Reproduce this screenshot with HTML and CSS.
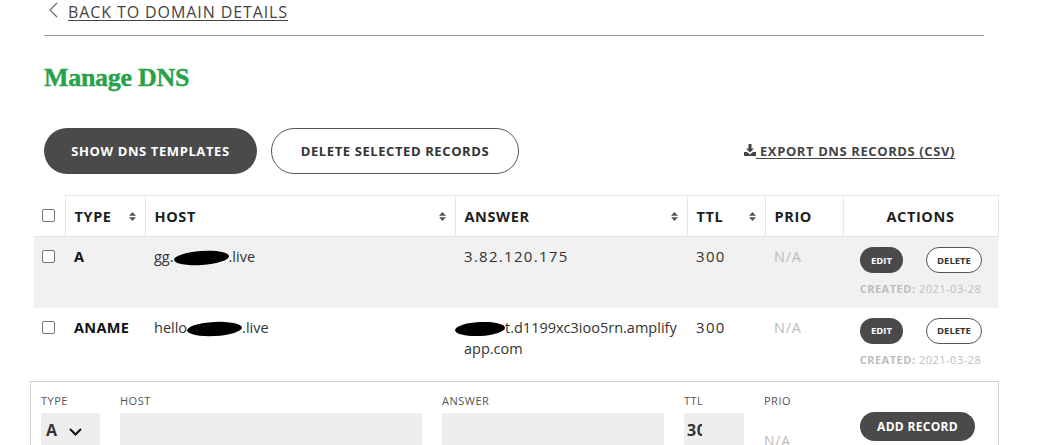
FILE: index.html
```html
<!DOCTYPE html>
<html>
<head>
<meta charset="utf-8">
<link rel="stylesheet" href="styles.css">
</head>
<body>
<div class="page">
  <div class="top">
    <a class="back" href="#">
      <svg class="chev" width="10" height="16" viewBox="0 0 10 16"><path d="M9 1 L2 8 L9 15" fill="none" stroke="#666" stroke-width="1.1"/></svg>
      <span class="back-text">BACK TO DOMAIN DETAILS</span>
    </a>
    <div class="rule"></div>
    <h1 class="title">Manage DNS</h1>
    <div class="toolbar">
      <button class="pill pill-dark">SHOW DNS TEMPLATES</button>
      <button class="pill pill-outline">DELETE SELECTED RECORDS</button>
      <a class="export" href="#">
        <svg class="dl" width="12" height="12" viewBox="0 0 12 12"><path d="M4.5 0 H7.5 V4.5 H10 L6 8.5 L2 4.5 H4.5 Z" fill="#444"/><path d="M0 8 H3 L6 10.5 L9 8 H12 V12 H0 Z" fill="#444"/></svg><span class="export-text"> EXPORT DNS RECORDS (CSV)</span>
      </a>
    </div>
  </div>

  <table class="dns">
    <colgroup>
      <col style="width:31px"><col style="width:80px"><col style="width:310px"><col style="width:232px"><col style="width:78px"><col style="width:78px"><col style="width:155px">
    </colgroup>
    <thead>
      <tr>
        <th class="c-check"><span class="cb"></span></th>
        <th><div class="th-in">TYPE<svg class="sort" width="7" height="9" viewBox="0 0 7 9"><path d="M3.5 0 L7 3.7 H0 Z M0 5.3 H7 L3.5 9 Z" fill="#555"/></svg></div></th>
        <th><div class="th-in">HOST<svg class="sort" width="7" height="9" viewBox="0 0 7 9"><path d="M3.5 0 L7 3.7 H0 Z M0 5.3 H7 L3.5 9 Z" fill="#555"/></svg></div></th>
        <th><div class="th-in">ANSWER<svg class="sort" width="7" height="9" viewBox="0 0 7 9"><path d="M3.5 0 L7 3.7 H0 Z M0 5.3 H7 L3.5 9 Z" fill="#555"/></svg></div></th>
        <th><div class="th-in">TTL<svg class="sort" width="7" height="9" viewBox="0 0 7 9"><path d="M3.5 0 L7 3.7 H0 Z M0 5.3 H7 L3.5 9 Z" fill="#555"/></svg></div></th>
        <th><div class="th-in">PRIO</div></th>
        <th class="c-actions">ACTIONS</th>
      </tr>
    </thead>
    <tbody>
      <tr class="row-alt">
        <td class="c-check"><span class="cb"></span></td>
        <td class="type">A</td>
        <td>gg.<span class="blob blob-a"></span>.live</td>
        <td class="num">3.82.120.175</td>
        <td class="num">300</td>
        <td class="na">N/A</td>
        <td class="c-actions">
          <div class="acts"><button class="mini mini-dark">EDIT</button><button class="mini mini-outline">DELETE</button></div>
          <div class="created"><b>CREATED:</b> 2021-03-28</div>
        </td>
      </tr>
      <tr>
        <td class="c-check"><span class="cb"></span></td>
        <td class="type">ANAME</td>
        <td>hello<span class="blob blob-b"></span>.live</td>
        <td><span class="blob blob-c"></span>t.d1199xc3ioo5rn.amplify<br>app.com</td>
        <td class="num">300</td>
        <td class="na">N/A</td>
        <td class="c-actions">
          <div class="acts"><button class="mini mini-dark">EDIT</button><button class="mini mini-outline">DELETE</button></div>
          <div class="created"><b>CREATED:</b> 2021-03-28</div>
        </td>
      </tr>
    </tbody>
  </table>

  <div class="add-form">
    <div class="field">
      <div class="lbl">TYPE</div>
      <div class="inp inp-select"><span class="sel-val">A</span><svg width="13" height="8" viewBox="0 0 13 8"><path d="M1 1 L6.5 6.5 L12 1" fill="none" stroke="#111" stroke-width="2"/></svg></div>
    </div>
    <div class="field">
      <div class="lbl">HOST</div>
      <div class="inp"></div>
    </div>
    <div class="field">
      <div class="lbl">ANSWER</div>
      <div class="inp"></div>
    </div>
    <div class="field">
      <div class="lbl">TTL</div>
      <div class="inp inp-ttl"><span class="ttl-clip">300</span></div>
    </div>
    <div class="field">
      <div class="lbl">PRIO</div>
      <div class="prio-na">N/A</div>
    </div>
    <div class="field field-btn">
      <button class="add-btn">ADD RECORD</button>
    </div>
  </div>
</div>
</body>
</html>
```

FILE: styles.css
```css
* { box-sizing: border-box; }
html, body { margin: 0; padding: 0; background: #fff; }
body {
  font-family: "Open Sans", "Liberation Sans", sans-serif;
  color: #333;
  overflow: hidden;
}
.page { width: 1053px; }
.top { padding: 0 69px 0 44px; }

.back {
  display: flex;
  align-items: center;
  height: 24px;
  color: #444;
  text-decoration: none;
  padding-left: 4px;
}
.chev { margin-right: 10px; margin-top: -4px; }
.back-text {
  font-size: 16px;
  letter-spacing: 0.9px;
  text-decoration: underline;
  text-underline-offset: 2px;
  text-decoration-thickness: 1px;
}
.rule { height: 1px; background: #9a9a9a; margin-top: 11px; }

.title {
  margin: 27px 0 0;
  font-family: "Liberation Serif", "DejaVu Serif", serif;
  font-weight: bold;
  font-size: 26px;
  line-height: 30px;
  color: #27a24a;
  letter-spacing: -0.3px;
  -webkit-text-stroke: 0.4px #27a24a;
}

.toolbar {
  display: flex;
  align-items: center;
  margin-top: 35px;
  height: 46px;
}
.pill {
  height: 46px;
  border-radius: 23px;
  font-family: inherit;
  font-weight: 700;
  font-size: 13px;
  letter-spacing: 0.6px;
  padding: 0;
  cursor: pointer;
}
.pill-dark { width: 213px; background: #4a4a4a; color: #fff; border: 0; }
.pill-outline { width: 248px; margin-left: 14px; background: #fff; color: #333; border: 1px solid #555; }
.export {
  margin-left: auto;
  margin-right: 29px;
  color: #444;
  font-weight: 700;
  font-size: 13px;
  letter-spacing: 0.6px;
  text-decoration: none;
  display: flex;
  align-items: center;
}
.export-text { text-decoration: underline; text-underline-offset: 2px; white-space: pre; }
.dl { margin-top: -3px; }

.dns {
  margin: 21px 0 0 34px;
  border-collapse: collapse;
  table-layout: fixed;
  width: 964px;
  font-size: 14.5px;
}
.dns th {
  height: 41px;
  text-align: left;
  font-weight: 700;
  font-size: 14.5px;
  letter-spacing: 0.6px;
  color: #1e1e1e;
  border: 1px solid #e6e6e6;
  padding: 0 9px;
  vertical-align: middle;
}
.dns th.c-check { border: 0; border-bottom: 1px solid #e6e6e6; padding: 0 0 0 8px; }
.th-in { display: flex; align-items: center; justify-content: space-between; }
.sort { margin-top: 1px; }
.dns th.c-actions { text-align: center; }

.dns td {
  vertical-align: top;
  padding: 9px 9px 0 9px;
  color: #333;
  line-height: 21px;
}
.dns tbody tr { height: 71px; }
.row-alt td { background: #f1f1f1; }
.dns td.c-check { padding: 13px 0 0 8px; }
.dns td.type { font-weight: 700; font-size: 14.5px; color: #111; letter-spacing: 0.3px; }
.dns td.num { font-size: 15px; letter-spacing: 1.3px; }
.dns td.na { color: #bbb; letter-spacing: 0.8px; }

.cb {
  display: block;
  width: 13px;
  height: 13px;
  border: 1px solid #767676;
  border-radius: 2px;
  background: #fff;
}
.blob {
  display: inline-block;
  height: 14px;
  background: #000;
  border-radius: 50%;
  vertical-align: -3px;
}
.blob-a { width: 55px; transform: rotate(-4deg); }
.blob-b { width: 55px; transform: rotate(-3deg); }
.blob-c { width: 50px; margin-left: -9px; transform: rotate(-3deg); }

.dns td.c-actions { text-align: center; padding: 10px 0 0 0; }
.acts { display: flex; justify-content: center; gap: 23px; margin-left: 1px; }
.mini {
  height: 26px;
  border-radius: 13px;
  font-family: inherit;
  font-weight: 700;
  font-size: 9.5px;
  letter-spacing: 0;
  padding: 0;
}
.mini-dark { width: 43px; background: #4a4a4a; color: #fff; border: 0; }
.mini-outline { width: 56px; background: #fff; color: #333; border: 1px solid #555; }
.created {
  margin-top: 9px;
  font-size: 11px;
  line-height: 14px;
  color: #bdbdbd;
  letter-spacing: 0.5px;
}
.created b { font-weight: 700; }

.add-form {
  margin: 2px 0 0 30px;
  width: 969px;
  height: 80px;
  border: 1px solid #cfcfcf;
  padding: 12px 0 0 10px;
  display: grid;
  grid-template-columns: 59px 302px 222px 60px 76px 115px;
  column-gap: 20px;
}
.lbl {
  font-size: 11px;
  line-height: 14px;
  color: #555;
  letter-spacing: 0.5px;
  height: 19px;
}
.inp { height: 40px; background: #eeeeee; }
.inp-select {
  display: flex;
  align-items: flex-start;
  padding: 6px 0 0 5px;
}
.sel-val { font-weight: 700; font-size: 16px; color: #333; margin-right: 12px; }
.inp-select svg { margin-top: 9px; }
.inp-ttl { padding: 6px 0 0 3px; }
.ttl-clip {
  display: block;
  width: 15px;
  overflow: hidden;
  white-space: nowrap;
  font-weight: 700;
  font-size: 16px;
  color: #333;
  letter-spacing: 0.5px;
}
.prio-na { margin-top: 18px; font-size: 14px; color: #bbb; letter-spacing: 0.8px; }
.field-btn { padding-top: 18px; }
.add-btn {
  width: 115px;
  height: 29px;
  border: 0;
  border-radius: 15px;
  background: #4a4a4a;
  color: #fff;
  font-family: inherit;
  font-weight: 700;
  font-size: 12px;
  letter-spacing: 0.3px;
  padding: 0;
}
```
